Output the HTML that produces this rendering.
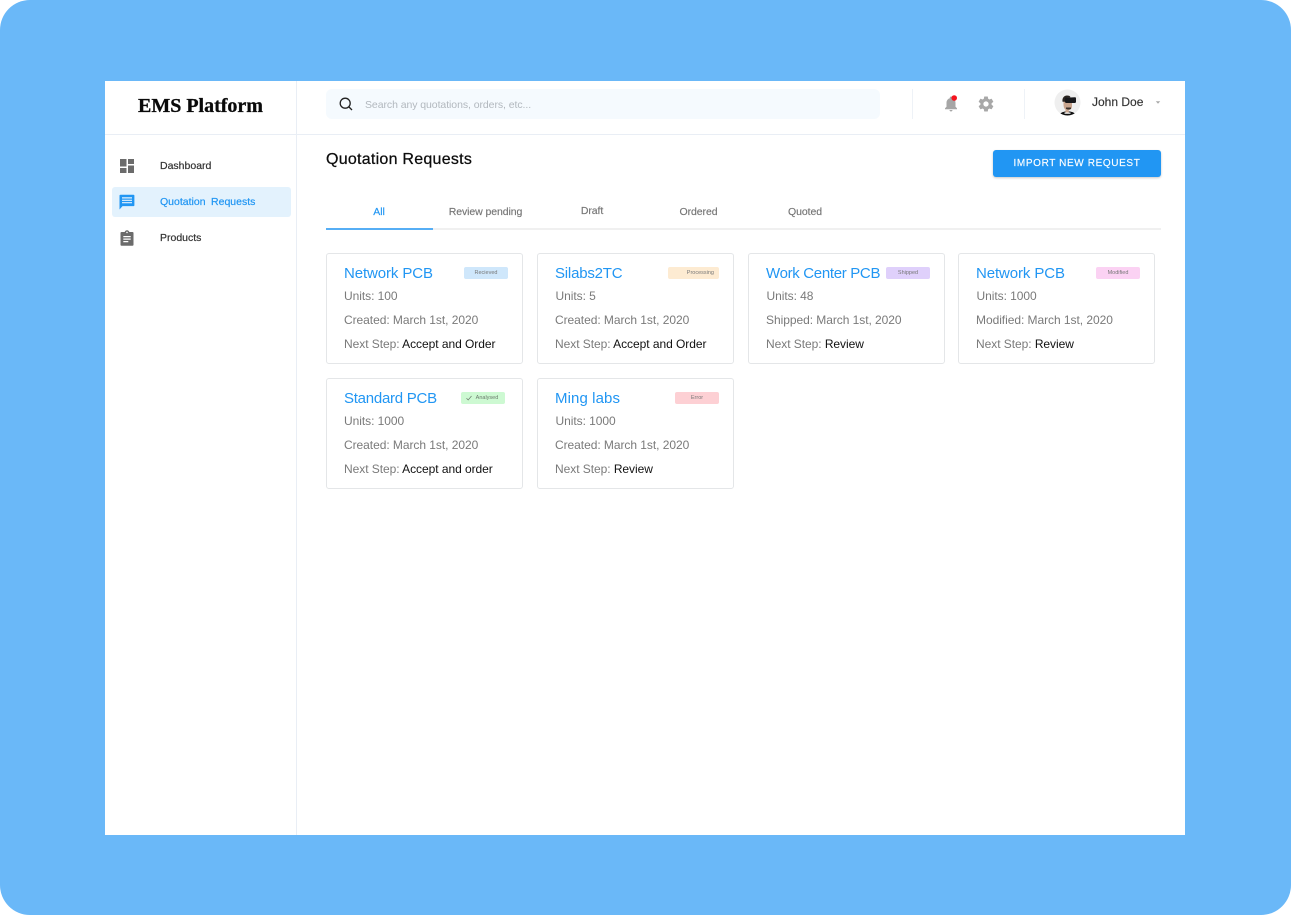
<!DOCTYPE html>
<html><head><meta charset="utf-8"><style>
*{box-sizing:border-box}
html,body{margin:0;padding:0;background:#fff;width:1291px;height:915px;overflow:hidden;font-family:"Liberation Sans",sans-serif}
#bg{position:absolute;left:0;top:0;width:1291px;height:915px;background:#6AB8F8;border-radius:30px}
#win{position:absolute;left:105px;top:81px;width:1080px;height:754px;background:#fff}
.a{position:absolute;white-space:nowrap}
.line{position:absolute;background:#E9EEF5}
.nav{font-size:10.5px;line-height:14px;color:#333;letter-spacing:0;-webkit-text-stroke:.2px}
.tab{font-size:10.5px;line-height:14px;color:#757575;letter-spacing:-.08px;transform:translateX(-50%);-webkit-text-stroke:.15px}
.card{position:absolute;width:197px;height:111px;border:1px solid #E4E6E8;border-radius:3px;background:#fff}
.t{position:absolute;left:17px;top:10.5px;font-size:15px;line-height:18px;color:#2196F3;white-space:nowrap}
.r{position:absolute;left:17px;font-size:12px;line-height:16px;color:#7a7a7a;white-space:nowrap;letter-spacing:-.05px}
.r b{font-weight:400;color:#111}
.r1{top:34px}.r2{top:58px}.r3{top:82px}
.b{position:absolute;top:13px;width:44px;height:12px;border-radius:2px;font-size:5.5px;line-height:13px;text-align:center;color:#777}
</style></head><body>
<div id="bg"></div>
<div id="win"></div>
<div class="line" style="left:296px;top:81px;width:1px;height:754px"></div>
<div class="line" style="left:105px;top:134px;width:1080px;height:1px"></div>

<div class="a" style="left:138px;top:94px;font:bold 20px/24px 'Liberation Serif',serif;color:#0a0a0a;letter-spacing:0;-webkit-text-stroke:.3px">EMS Platform</div>

<div class="a" style="left:326px;top:89px;width:554px;height:30px;background:#F5FAFE;border-radius:6px"></div>
<svg class="a" style="left:338px;top:96px" width="16" height="16" viewBox="0 0 16 16" fill="none" stroke="#222" stroke-width="1.3"><circle cx="7.2" cy="7.2" r="5"/><path d="M11 11l3 3"/></svg>
<div class="a" style="left:365px;top:97.5px;font-size:10.5px;line-height:14px;color:#B2B8BE;letter-spacing:-.07px">Search any quotations, orders, etc...</div>

<div class="line" style="left:912px;top:89px;width:1px;height:30px;background:#EEF2F7"></div>
<div class="line" style="left:1024px;top:89px;width:1px;height:30px;background:#EEF2F7"></div>

<svg class="a" style="left:942px;top:95px" width="18" height="18" viewBox="0 0 18 18"><path fill="#A6A6A6" d="M9 1.500c-.7 0-1.200.5-1.200 1.200v.5C5.700 3.800 4.500 5.600 4.500 7.800v4L3 13.300v.9h12v-.9l-1.500-1.500v-4c0-2.200-1.200-4-3.300-4.600v-.5c0-.7-.5-1.200-1.200-1.200zM7.500 15c0 .8.700 1.500 1.500 1.500s1.500-.7 1.500-1.500z"/><circle cx="12.200" cy="3" r="2.800" fill="#F5141E"/></svg>
<svg class="a" style="left:977px;top:95px" width="18" height="18" viewBox="0 0 24 24"><path fill="#A8A8A8" d="M19.430 12.980c.04-.32.070-.64.070-.98s-.03-.66-.07-.98l2.110-1.650c.19-.15.240-.42.120-.64l-2-3.460c-.12-.22-.39-.3-.61-.22l-2.490 1c-.52-.4-1.080-.73-1.690-.98l-.38-2.650C14.460 2.180 14.250 2 14 2h-4c-.25 0-.46.180-.49.420l-.38 2.650c-.61.250-1.170.59-1.690.98l-2.490-1c-.23-.09-.49 0-.61.220l-2 3.460c-.13.220-.07.490.12.640l2.110 1.650c-.04.320-.07.650-.07.980s.03.660.07.980l-2.110 1.650c-.19.150-.24.420-.12.640l2 3.460c.12.220.39.300.61.220l2.490-1c.52.400 1.080.730 1.690.980l.38 2.650c.03.240.24.420.49.420h4c.25 0 .46-.18.49-.42l.38-2.650c.61-.25 1.170-.59 1.690-.98l2.490 1c.23.090.49 0 .61-.22l2-3.460c.12-.22.07-.49-.12-.64l-2.110-1.650zM12 15.500c-1.930 0-3.500-1.570-3.500-3.500s1.570-3.500 3.500-3.500 3.500 1.570 3.500 3.500-1.570 3.500-3.500 3.500z"/></svg>

<svg class="a" style="left:1054px;top:89px" width="27" height="27" viewBox="0 0 27 27"><defs><clipPath id="c"><circle cx="13.500" cy="13.500" r="13"/></clipPath></defs><circle cx="13.500" cy="13.500" r="13" fill="#EFEFEF"/><g clip-path="url(#c)"><path fill="#0f0f0f" d="M5 27c.5-3 3.500-4 6-4.500h5c3 .5 5.500 1.500 6 4.500z"/><path fill="#fff" d="M10.500 23.500h6v1.200h-6z"/><path fill="#C9A58E" d="M9.500 11h8.500v6.500c0 2-1.500 3.500-3.200 3.500v2.500h-3.300v-3C10 19.500 9.500 17.500 9.500 15z"/><path fill="#2a2420" d="M8.500 12.500c-.5-3.500 1.500-6 4.500-6 2 0 3 .5 3.500 1.700l-5 1v3.500h-3z"/><path fill="#17171a" d="M11 8.800l10-.6c.6 0 1 .4 1 1v3.600c0 .8-.5 1.200-1.200 1.200h-8.500c-.8 0-1.300-.5-1.300-1.200z"/><path fill="#3a302a" d="M12 18.500h5v1.300c-1.500 1-3.500 1-5 0z"/></g></svg>
<div class="a" style="left:1092px;top:95px;font-size:12px;line-height:15px;color:#333;letter-spacing:0;-webkit-text-stroke:.15px">John Doe</div>
<svg class="a" style="left:1155px;top:100px" width="6" height="5"><path d="M.8 1.200h4.400L3 3.800z" fill="#A8A8A8"/></svg>

<div class="a" style="left:993px;top:150px;width:168px;height:27px;background:#2196F3;border-radius:3px;box-shadow:0 1px 2px rgba(0,0,0,.22);color:#fff;font-size:10px;line-height:28px;text-align:center;letter-spacing:.62px;-webkit-text-stroke:.15px">IMPORT NEW REQUEST</div>

<div class="a" style="left:326px;top:150px;font-size:16px;line-height:20px;color:#0c0c0c;letter-spacing:.26px;-webkit-text-stroke:.25px">Quotation Requests</div>

<div class="a" style="left:112px;top:187px;width:179px;height:30px;background:#E3F2FD;border-radius:3px"></div>
<svg class="a" style="left:119px;top:158px" width="16" height="16" viewBox="0 0 16 16"><path fill="#6B6B6B" d="M1 1h6.500v7.500H1zM1 10h6.500v5H1zM9 1h6v5H9zM9 7.500h6V15H9z"/></svg>
<svg class="a" style="left:119px;top:194px" width="16" height="16" viewBox="0 0 16 16"><path fill="#2196F3" d="M1.500.8h13c.5 0 .9.4.9.9v9.500c0 .5-.4.9-.9.9H3.500L.5 15.500V1.700c0-.5.400-.9 1-.9z"/><path fill="#E3F2FD" d="M3 3.300h10v1.200H3zM3 5.700h10v1.200H3zM3 8.100h10v1.200H3z"/></svg>
<svg class="a" style="left:119px;top:230px" width="16" height="16" viewBox="0 0 16 16"><path fill="#6B6B6B" d="M2.500 2H5.700C6 1 6.900.3 8 .3S10 1 10.300 2h3.200c.6 0 1 .4 1 1v11.700c0 .6-.4 1-1 1h-11c-.6 0-1-.4-1-1V3c0-.6.4-1 1-1z"/><path fill="#fff" d="M4.300 6h7.400v1.200H4.300zM4.300 8.500h7.400v1.200H4.300zM4.300 11h5v1.200h-5z"/><circle cx="8" cy="2.400" r=".8" fill="#fff"/></svg>
<div class="a nav" style="left:160px;top:159px">Dashboard</div>
<div class="a nav" style="left:160px;top:195px;color:#2196F3;word-spacing:2.600px">Quotation Requests</div>
<div class="a nav" style="left:160px;top:231px">Products</div>

<div class="a tab" style="left:379px;top:205px;color:#2196F3">All</div>
<div class="a tab" style="left:485.500px;top:205px">Review pending</div>
<div class="a tab" style="left:592px;top:204px">Draft</div>
<div class="a tab" style="left:698.500px;top:205px">Ordered</div>
<div class="a tab" style="left:805px;top:205px">Quoted</div>
<div class="a" style="left:326px;top:228px;width:835px;height:2px;background:#F0F0F0"></div>
<div class="a" style="left:326px;top:228px;width:107px;height:1.500px;background:#56AEF5"></div>

<div class="card" style="left:326px;top:253px"><div class="t" style="letter-spacing:-.1px">Network PCB</div><div class="b" style="left:137px;background:#CFE7FB">Recieved</div><div class="r r1">Units: 100</div><div class="r r2">Created: March 1st, 2020</div><div class="r r3">Next Step: <b>Accept and Order</b></div></div>
<div class="card" style="left:537px;top:253px"><div class="t" style="letter-spacing:-.2px">Silabs2TC</div><div class="b" style="left:130px;width:51px;background:#FDEBD2;text-align:right;padding-right:5px">Processing</div><div class="r r1" style="left:17.500px">Units: 5</div><div class="r r2">Created: March 1st, 2020</div><div class="r r3">Next Step: <b>Accept and Order</b></div></div>
<div class="card" style="left:748px;top:253px"><div class="t" style="letter-spacing:-.32px">Work Center PCB</div><div class="b" style="left:137px;background:#DFD0FB">Shipped</div><div class="r r1" style="left:17.500px">Units: 48</div><div class="r r2">Shipped: March 1st, 2020</div><div class="r r3">Next Step: <b>Review</b></div></div>
<div class="card" style="left:958px;top:253px"><div class="t" style="letter-spacing:-.1px">Network PCB</div><div class="b" style="left:137px;background:#FBD2F3">Modified</div><div class="r r1" style="left:17.500px">Units: 1000</div><div class="r r2">Modified: March 1st, 2020</div><div class="r r3">Next Step: <b>Review</b></div></div>
<div class="card" style="left:326px;top:378px"><div class="t" style="letter-spacing:-.25px">Standard PCB</div><div class="b" style="left:134px;background:#CDF9D2;color:#6a7a6c;padding-left:8px">Analysed<svg style="position:absolute;left:5px;top:3px" width="6" height="6" viewBox="0 0 6 6" fill="none" stroke="#6a7a6c" stroke-width=".7"><path d="M.5 3.200L2.200 5 5.500 1"/></svg></div><div class="r r1">Units: 1000</div><div class="r r2">Created: March 1st, 2020</div><div class="r r3">Next Step: <b>Accept and order</b></div></div>
<div class="card" style="left:537px;top:378px"><div class="t" style="letter-spacing:.1px">Ming labs</div><div class="b" style="left:137px;background:#FDD0D4">Error</div><div class="r r1" style="left:17.500px">Units: 1000</div><div class="r r2">Created: March 1st, 2020</div><div class="r r3">Next Step: <b>Review</b></div></div>
</body></html>
